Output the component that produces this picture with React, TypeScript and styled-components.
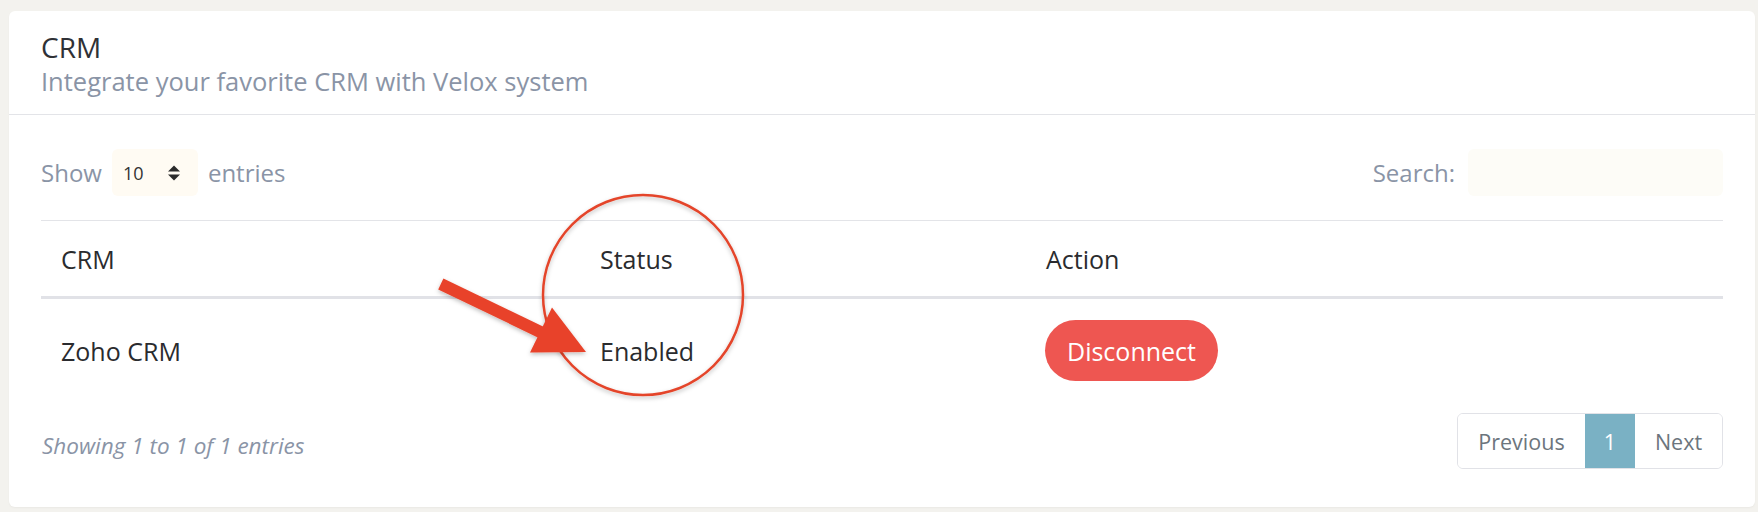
import React from "react";
import styled, { createGlobalStyle } from "styled-components";

const Global = createGlobalStyle`
  html, body { margin: 0; padding: 0; background: #f3f2ee; }
  body { font-family: "Open Sans", Lato, sans-serif; }
  * { box-sizing: border-box; }
`;

const Page = styled.div`
  position: relative;
  width: 1758px;
  height: 512px;
  padding: 11px 3px 5px 9px;
  background: #f3f2ee;
`;

const Card = styled.section`
  background: #ffffff;
  border-radius: 6px;
  height: 496px;
  display: flex;
  flex-direction: column;
  box-shadow: 0 1px 2px rgba(0, 0, 0, 0.04);
`;

const CardHeader = styled.header`
  height: 104px;
  padding: 18px 32px 0;
  border-bottom: 1px solid #e3e4e8;
  display: flex;
  flex-direction: column;
`;

const Title = styled.h4`
  margin: 0;
  font-size: 28px;
  font-weight: 400;
  line-height: 36px;
  color: #2f3136;
`;

const Subtitle = styled.p`
  margin: 0;
  font-size: 25.5px;
  line-height: 32px;
  color: #8a94a6;
`;

const CardBody = styled.div`
  padding: 34px 32px 36px;
  display: flex;
  flex-direction: column;
  flex: 1;
`;

const Controls = styled.div`
  display: flex;
  justify-content: space-between;
  align-items: center;
  height: 47px;
`;

const Label = styled.label`
  display: flex;
  align-items: center;
  gap: 10px;
  font-size: 24px;
  line-height: 32px;
  color: #8a94a6;
`;

const SelectBox = styled.div`
  width: 86px;
  height: 47px;
  border-radius: 6px;
  background: #fffbf3;
  display: flex;
  align-items: center;
  justify-content: space-between;
  padding: 0 17px 0 11px;
  font-size: 18px;
  color: #333;
`;

const SearchInput = styled.div`
  width: 255px;
  height: 47px;
  border-radius: 6px;
  background: #fdfcf7;
  margin-left: 3px;
`;

const Table = styled.div`
  margin-top: 24px;
  border-top: 1px solid #e3e4e8;
  display: flex;
  flex-direction: column;
`;

const Row = styled.div<{ $head?: boolean }>`
  display: grid;
  grid-template-columns: 539px 446px 1fr;
  align-items: center;
  height: ${(p) => (p.$head ? "78px" : "103px")};
  border-bottom: ${(p) => (p.$head ? "3px solid #e1e2e7" : "none")};
`;

const Cell = styled.div`
  padding-left: 20px;
  font-size: 25px;
  line-height: 32px;
  color: #2a2b2e;
`;

const Button = styled.button`
  height: 61px;
  padding: 0 22px;
  border: none;
  border-radius: 31px;
  background: #ee5651;
  color: #ffffff;
  font-family: inherit;
  font-size: 25px;
  margin-left: -1px;
`;

const Footer = styled.div`
  margin-top: 11px;
  display: flex;
  justify-content: space-between;
  align-items: center;
`;

const Info = styled.div`
  font-size: 22.5px;
  font-style: italic;
  color: #8a94a6;
  padding: 8px 0 0 1px;
`;

const Pager = styled.div`
  display: flex;
  height: 56px;
  border: 1px solid #e1e2e7;
  border-radius: 6px;
  overflow: hidden;
`;

const PageItem = styled.div<{ $active?: boolean; $w: number }>`
  width: ${(p) => p.$w}px;
  display: flex;
  align-items: center;
  justify-content: center;
  font-size: 21.5px;
  color: ${(p) => (p.$active ? "#ffffff" : "#6c757d")};
  background: ${(p) => (p.$active ? "#7ab1c4" : "#ffffff")};
`;

const Overlay = styled.svg`
  position: absolute;
  left: 0;
  top: 0;
  pointer-events: none;
`;

const SortIcon = () => (
  <svg width="14" height="16" viewBox="0 0 14 16">
    <path d="M7 0.5 L13 6.5 H1 Z" fill="#2b2b2b" />
    <path d="M7 15.5 L13 9.5 H1 Z" fill="#2b2b2b" />
  </svg>
);

export default function App() {
  return (
    <>
      <Global />
      <Page>
        <Card>
          <CardHeader>
            <Title>CRM</Title>
            <Subtitle>Integrate your favorite CRM with Velox system</Subtitle>
          </CardHeader>
          <CardBody>
            <Controls>
              <Label>
                Show
                <SelectBox>
                  <span>10</span>
                  <SortIcon />
                </SelectBox>
                entries
              </Label>
              <Label>
                Search:
                <SearchInput />
              </Label>
            </Controls>
            <Table>
              <Row $head>
                <Cell>CRM</Cell>
                <Cell>Status</Cell>
                <Cell>Action</Cell>
              </Row>
              <Row>
                <Cell>Zoho CRM</Cell>
                <Cell>Enabled</Cell>
                <Cell>
                  <Button>Disconnect</Button>
                </Cell>
              </Row>
            </Table>
            <Footer>
              <Info>Showing 1 to 1 of 1 entries</Info>
              <Pager>
                <PageItem $w={127}>Previous</PageItem>
                <PageItem $w={50} $active>
                  1
                </PageItem>
                <PageItem $w={87}>Next</PageItem>
              </Pager>
            </Footer>
          </CardBody>
        </Card>
        <Overlay width="1758" height="512" viewBox="0 0 1758 512">
          <defs>
            <filter id="sh" x="-20%" y="-20%" width="140%" height="140%">
              <feDropShadow dx="0" dy="2" stdDeviation="2" floodColor="#000" floodOpacity="0.25" />
            </filter>
          </defs>
          <circle cx="643" cy="295" r="100" fill="none" stroke="#e4452b" strokeWidth="2.5" filter="url(#sh)" />
          <g filter="url(#sh)" fill="#e8432a">
            <path d="M443.4 278.6 L545.1 327.6 L539.9 338.4 L438.2 289.4 Z" />
            <path d="M586 352 L552 307.5 L530 352.5 Z" />
          </g>
        </Overlay>
      </Page>
    </>
  );
}
